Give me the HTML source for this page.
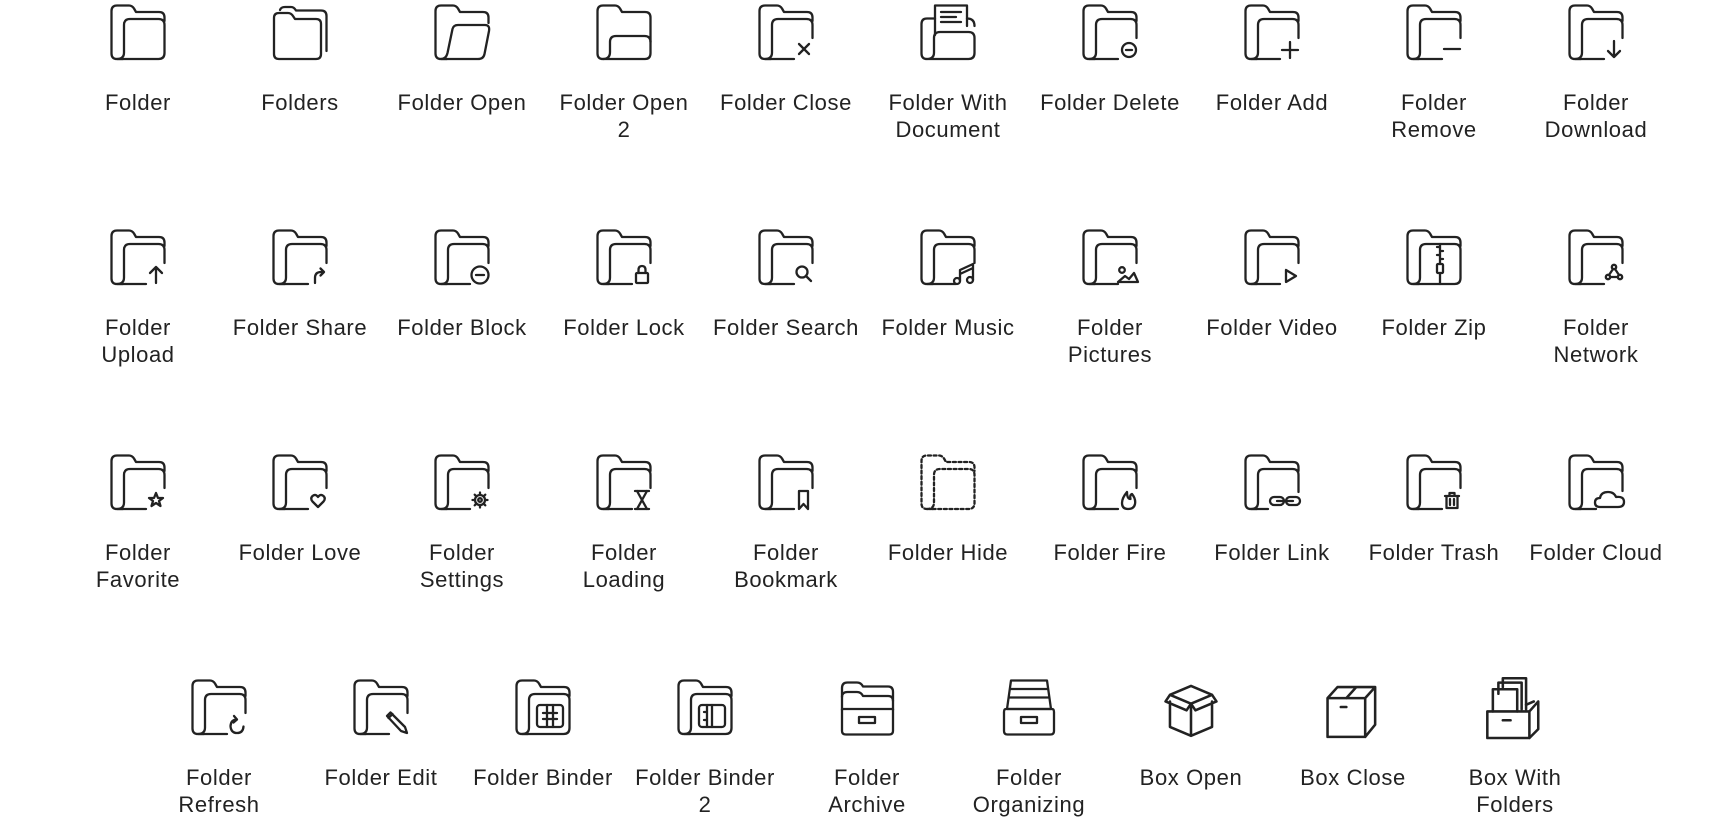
<!DOCTYPE html>
<html><head><meta charset="utf-8"><style>
html,body{margin:0;padding:0;background:#fff;width:1736px;height:822px;overflow:hidden;position:relative}
.i{position:absolute;width:170px;margin-left:-85px;text-align:center}
.i svg{display:block;margin:0 auto;width:56px;height:56px;overflow:visible;fill:none;stroke:#222;stroke-width:2.3;stroke-linecap:round;stroke-linejoin:round}
.i svg.b{width:62px;height:62px;margin-top:-3px;margin-bottom:-3px}
.i div{margin-top:29px;font-family:"Liberation Sans",sans-serif;font-size:22px;letter-spacing:0.6px;line-height:27px;color:#222;white-space:nowrap}
</style></head><body>
<svg width="0" height="0" style="position:absolute">
<defs>
<path id="fb" d="M13 55H7Q1.5 55 1.5 49.5V7Q1.5 1.5 7 1.5H19Q22 1.5 24 4.5L26 8H49Q54.5 8 54.5 13.5V17"/>
<path id="ff" d="M7 55Q14 55 14 48.5V21Q14 15 20 15H48.5Q54.5 15 54.5 21V49Q54.5 55 48.5 55H7"/>
<path id="fp" d="M36 55H7Q14 55 14 48.5V21Q14 15 20 15H48.5Q54.5 15 54.5 21V34"/>
</defs></svg>

<!-- Row 1 -->
<div class="i" style="left:138px;top:4px"><svg viewBox="0 0 56 56"><use href="#fb"/><use href="#ff"/></svg><div>Folder</div></div>
<div class="i" style="left:300px;top:4px"><svg viewBox="0 0 56 56"><path d="M8 6Q9 3 13 3H19Q22 3 24 6.5H49Q54.5 6.5 54.5 12V47"/><path d="M7 55Q2 55 2 50V14Q2 9 7 9H16Q19 9 21 12L23 15H44Q49 15 49 20V50Q49 55 44 55Z"/></svg><div>Folders</div></div>
<div class="i" style="left:462px;top:4px"><svg viewBox="0 0 56 56"><path d="M13 55H7Q1.5 55 1.5 49.5V7Q1.5 1.5 7 1.5H19Q22 1.5 24 4.5L26 8H49Q54.5 8 54.5 13.5V19"/><path d="M7 55Q12 55 13.5 49L18.5 25Q19.5 21 24 21H51Q56 21 55 27L50.5 50Q49.5 55 44 55H7"/></svg><div>Folder Open</div></div>
<div class="i" style="left:624px;top:4px"><svg viewBox="0 0 56 56"><path d="M7 55Q1.5 55 1.5 49.5V7Q1.5 1.5 7 1.5H19Q22 1.5 24 4.5L26 8H49Q54.5 8 54.5 13.5V49Q54.5 55 49 55Z"/><path d="M7 55Q14 55 14 48V38Q14 32 20 32H48.5Q54.5 32 54.5 38"/></svg><div>Folder Open<br>2</div></div>
<div class="i" style="left:786px;top:4px"><svg viewBox="0 0 56 56"><use href="#fb"/><use href="#fp"/><path d="M41 40L51 50M51 40L41 50"/></svg><div>Folder Close</div></div>
<div class="i" style="left:948px;top:4px"><svg viewBox="0 0 56 56"><path d="M15 31V1.5H47V22M21 8H41M21 13H36M21 18H41"/><path d="M7 55Q1.5 55 1.5 49.5V20Q1.5 14.5 7 14.5H15M47 14.5Q54.5 14.5 54.5 22"/><path d="M7 55Q14 55 14 48.5V34Q14 28 20 28H48.5Q54.5 28 54.5 34V49Q54.5 55 48.5 55H7"/></svg><div>Folder With<br>Document</div></div>
<div class="i" style="left:1110px;top:4px"><svg viewBox="0 0 56 56"><use href="#fb"/><use href="#fp"/><circle cx="47" cy="46" r="7"/><path d="M44 46H50"/></svg><div>Folder Delete</div></div>
<div class="i" style="left:1272px;top:4px"><svg viewBox="0 0 56 56"><use href="#fb"/><use href="#fp"/><path d="M46 38V54M38 46H54"/></svg><div>Folder Add</div></div>
<div class="i" style="left:1434px;top:4px"><svg viewBox="0 0 56 56"><use href="#fb"/><use href="#fp"/><path d="M38 45H54"/></svg><div>Folder<br>Remove</div></div>
<div class="i" style="left:1596px;top:4px"><svg viewBox="0 0 56 56"><use href="#fb"/><use href="#fp"/><path d="M46 37V53M40 47L46 53L52 47"/></svg><div>Folder<br>Download</div></div>

<!-- Row 2 -->
<div class="i" style="left:138px;top:229px"><svg viewBox="0 0 56 56"><use href="#fb"/><use href="#fp"/><path d="M46 54V38M40 44L46 38L52 44"/></svg><div>Folder<br>Upload</div></div>
<div class="i" style="left:300px;top:229px"><svg viewBox="0 0 56 56"><use href="#fb"/><use href="#fp"/><path d="M43 54V49Q43 43 49 43H52M48.5 39.5L52 43L48.5 46.5"/></svg><div>Folder Share</div></div>
<div class="i" style="left:462px;top:229px"><svg viewBox="0 0 56 56"><use href="#fb"/><use href="#fp"/><circle cx="46" cy="46" r="8.5"/><path d="M42 46H50"/></svg><div>Folder Block</div></div>
<div class="i" style="left:624px;top:229px"><svg viewBox="0 0 56 56"><use href="#fb"/><use href="#fp"/><rect x="40" y="44" width="12" height="10" rx="1"/><path d="M42.5 44V41Q42.5 37 46 37Q49.5 37 49.5 41V44"/></svg><div>Folder Lock</div></div>
<div class="i" style="left:786px;top:229px"><svg viewBox="0 0 56 56"><use href="#fb"/><use href="#fp"/><circle cx="44" cy="43" r="5.5"/><path d="M48 47L53 52"/></svg><div>Folder Search</div></div>
<div class="i" style="left:948px;top:229px"><svg viewBox="0 0 56 56"><use href="#fb"/><use href="#fp"/><circle cx="37" cy="52" r="3"/><circle cx="50" cy="51" r="3"/><path d="M40 52V41L53 35V51M40 45L53 39"/></svg><div>Folder Music</div></div>
<div class="i" style="left:1110px;top:229px"><svg viewBox="0 0 56 56"><use href="#fb"/><use href="#fp"/><circle cx="40" cy="41" r="2.8"/><path d="M36 53L43 47L47 50L52 44L56 53Z"/></svg><div>Folder<br>Pictures</div></div>
<div class="i" style="left:1272px;top:229px"><svg viewBox="0 0 56 56"><use href="#fb"/><use href="#fp"/><path d="M42 41V53L52 47Z"/></svg><div>Folder Video</div></div>
<div class="i" style="left:1434px;top:229px"><svg viewBox="0 0 56 56"><use href="#fb"/><use href="#ff"/><path d="M34 15V35M31 18H34M34 22H37M31 26H34M34 30H37"/><rect x="31" y="35" width="6" height="9" rx="1"/><path d="M34 44V55"/></svg><div>Folder Zip</div></div>
<div class="i" style="left:1596px;top:229px"><svg viewBox="0 0 56 56"><use href="#fb"/><use href="#fp"/><circle cx="46" cy="38" r="2.2"/><circle cx="40" cy="48" r="2.2"/><circle cx="52" cy="48" r="2.2"/><path d="M45 40L41 46M47 40L51 46M42 48H50"/></svg><div>Folder<br>Network</div></div>

<!-- Row 3 -->
<div class="i" style="left:138px;top:454px"><svg viewBox="0 0 56 56"><use href="#fb"/><use href="#fp"/><path d="M46 39L48 44L53 44L49 47L50.5 52L46 49L41.5 52L43 47L39 44L44 44Z"/></svg><div>Folder<br>Favorite</div></div>
<div class="i" style="left:300px;top:454px"><svg viewBox="0 0 56 56"><use href="#fb"/><use href="#fp"/><path d="M46 53L40.5 47.5Q38 44.5 40.5 42Q43.5 39.5 46 43Q48.5 39.5 51.5 42Q54 44.5 51.5 47.5Z"/></svg><div>Folder Love</div></div>
<div class="i" style="left:462px;top:454px"><svg viewBox="0 0 56 56"><use href="#fb"/><use href="#fp"/><circle cx="46" cy="46" r="5"/><circle cx="46" cy="46" r="1.8"/><path d="M46 38.5V41M46 51V53.5M38.5 46H41M51 46H53.5M40.7 40.7L42.5 42.5M49.5 49.5L51.3 51.3M40.7 51.3L42.5 49.5M49.5 42.5L51.3 40.7"/></svg><div>Folder<br>Settings</div></div>
<div class="i" style="left:624px;top:454px"><svg viewBox="0 0 56 56"><use href="#fb"/><use href="#fp"/><path d="M39 37H53M39 55H53M41 37L51 55M51 37L41 55"/></svg><div>Folder<br>Loading</div></div>
<div class="i" style="left:786px;top:454px"><svg viewBox="0 0 56 56"><use href="#fb"/><use href="#fp"/><path d="M41 37V55L45.5 50L50 55V37Z"/></svg><div>Folder<br>Bookmark</div></div>
<div class="i" style="left:948px;top:454px"><svg viewBox="0 0 56 56" style="stroke-dasharray:3 2.6"><use href="#fb"/><use href="#ff"/></svg><div>Folder Hide</div></div>
<div class="i" style="left:1110px;top:454px"><svg viewBox="0 0 56 56"><use href="#fb"/><use href="#fp"/><path d="M46 55Q40 55 40 49Q40 44 45 38Q45 45 48.5 45Q47.5 41 50 40Q54 45 53 50Q52 55 46 55Z"/></svg><div>Folder Fire</div></div>
<div class="i" style="left:1272px;top:454px"><svg viewBox="0 0 56 56"><use href="#fb"/><path d="M7 55Q14 55 14 48.5V21Q14 15 20 15H48.5Q54.5 15 54.5 21V38M7 55H24"/><rect x="26" y="43" width="14" height="8" rx="4"/><rect x="42" y="43" width="14" height="8" rx="4"/><path d="M33 47H49"/></svg><div>Folder Link</div></div>
<div class="i" style="left:1434px;top:454px"><svg viewBox="0 0 56 56"><use href="#fb"/><use href="#fp"/><path d="M39 42H53M43.5 42V39H48.5V42M40.5 42V54H51.5V42M44 45V51M48 45V51"/></svg><div>Folder Trash</div></div>
<div class="i" style="left:1596px;top:454px"><svg viewBox="0 0 56 56"><use href="#fb"/><path d="M7 55Q14 55 14 48.5V21Q14 15 20 15H48.5Q54.5 15 54.5 21V37M7 55H28"/><path d="M32 53Q27 53 27 48.5Q27 44 32 44Q33 38 40 38Q46 38 48 43Q56 42 56 48Q56 53 50 53Z"/></svg><div>Folder Cloud</div></div>

<!-- Row 4 -->
<div class="i" style="left:219px;top:679px"><svg viewBox="0 0 56 56"><use href="#fb"/><use href="#fp"/><path d="M42.5 43.5L46 40.5L43 37M46 40.5Q40 40.5 39.5 47Q40 54 46 54Q52 54 52.5 47.5"/></svg><div>Folder<br>Refresh</div></div>
<div class="i" style="left:381px;top:679px"><svg viewBox="0 0 56 56"><use href="#fb"/><use href="#fp"/><path d="M34 37L37.5 33.5L52 48L54 54L48 52Z M35.5 39L39.5 35"/></svg><div>Folder Edit</div></div>
<div class="i" style="left:543px;top:679px"><svg viewBox="0 0 56 56"><use href="#fb"/><use href="#ff"/><rect x="22" y="26" width="26" height="22" rx="3"/><path d="M32 26V48M38 26V48M28 34H42M28 40H42"/></svg><div>Folder Binder</div></div>
<div class="i" style="left:705px;top:679px"><svg viewBox="0 0 56 56"><use href="#fb"/><use href="#ff"/><rect x="22" y="26" width="26" height="22" rx="3"/><path d="M30 26V48M35 26V48M27 33H30M27 41H30"/></svg><div>Folder Binder<br>2</div></div>
<div class="i" style="left:867px;top:679px"><svg viewBox="0 0 56 56"><path d="M3 31V9Q3 3.5 8.5 3.5H18Q22 3.5 24 7.5H49Q54 7.5 54 13V31"/><path d="M3 18Q3 13 8.5 13H18Q22 13 24 17H49Q54 17 54 22"/><path d="M3 30V52Q3 55.5 7 55.5H50Q54 55.5 54 52V30Z"/><rect x="20" y="38" width="16" height="6"/></svg><div>Folder<br>Archive</div></div>
<div class="i" style="left:1029px;top:679px"><svg viewBox="0 0 56 56"><path d="M10 1.5H46L50 30H6Z M9 10H47M8 18.5H48"/><path d="M5 30H51Q53 30 53 33V52Q53 55.5 49.5 55.5H6.5Q3 55.5 3 52V33Q3 30 5 30Z"/><rect x="20" y="38" width="16" height="6"/></svg><div>Folder<br>Organizing</div></div>
<div class="i" style="left:1191px;top:679px"><svg class="b" viewBox="0 0 56 56"><path d="M28 25L9 17L28 9L47 17Z M9 17L5 23L24 31L28 25L32 31L51 23L47 17 M9 23V46L28 54L47 46V23 M28 25V54"/></svg><div>Box Open</div></div>
<div class="i" style="left:1353px;top:679px"><svg class="b" viewBox="0 0 56 56"><path d="M5 20H39V55H5Z M5 20L14 10H48L39 20 M48 10V44L39 55 M22 20L31 10 M17 28H22"/></svg><div>Box Close</div></div>
<div class="i" style="left:1515px;top:679px"><svg class="b" viewBox="0 0 56 56"><path d="M17 10V2H38V30M13 16V6H34V30"/><path d="M8 32V12H30V32"/><path d="M3 32H41V56H3Z M41 32L49 23V48L41 56 M38 26L45 23 M17 40H24"/></svg><div>Box With<br>Folders</div></div>
</body></html>
